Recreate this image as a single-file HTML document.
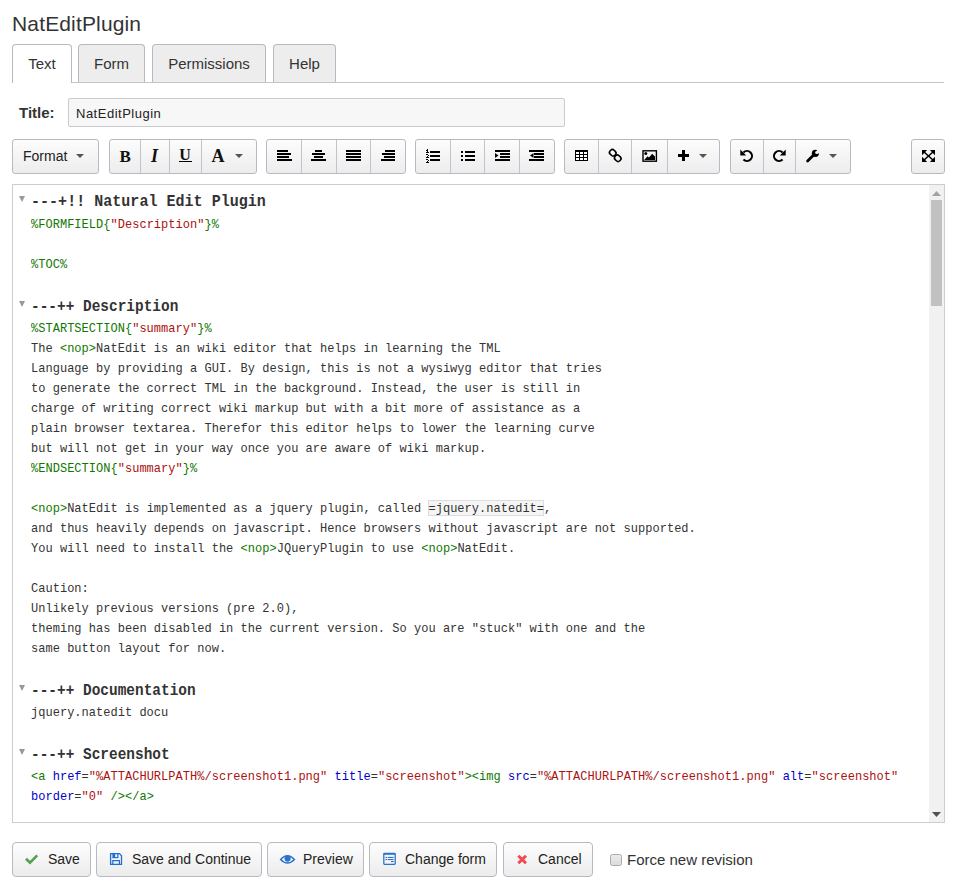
<!DOCTYPE html>
<html><head><meta charset="utf-8">
<style>
*{box-sizing:border-box}
html,body{margin:0;padding:0;background:#fff;width:960px;height:888px;overflow:hidden;font-family:"Liberation Sans",sans-serif;color:#333}
.abs{position:absolute}
#pt{left:12px;top:10px;letter-spacing:0.15px;font-size:21px;line-height:28px;color:#333}
.tabline{left:12px;top:82px;width:932px;height:1px;background:#c3c3cb;z-index:1}
.tab{position:absolute;top:44px;height:38px;border:1px solid #b9b9c3;border-bottom:none;border-radius:4px 4px 0 0;background:#ededed;font-size:15px;line-height:38px;text-align:center;color:#333}
.ts{display:inline-block}
.tab.act{background:#fff;height:39px;z-index:2}
#tl{left:19px;top:103px;font-size:15px;font-weight:bold;line-height:20px;color:#333}
#ti{left:68px;top:98px;width:497px;height:29px;border:1px solid #cbcbcb;border-radius:2px;background:#f7f7f7;font-size:13px;line-height:29px;padding-left:7px;letter-spacing:0.5px;color:#222}
.grp{position:absolute;top:139px;height:35px;border:1px solid #b9b9c3;border-radius:3px;background:linear-gradient(#fdfdfd,#ececec);display:flex}
.grp>div{height:33px;border-left:1px solid #c2c2ca;position:relative}
.grp>div:first-child{border-left:none}
.grp svg{position:absolute}
.caret{position:absolute;width:0;height:0;border-left:4px solid transparent;border-right:4px solid transparent;border-top:4px solid #555}
#ed{left:12px;top:184px;width:933px;height:639px;border:1px solid #cdcdcd;background:#fff;overflow:hidden}
#sb{position:absolute;right:0;top:0;width:15px;height:637px;background:#f1f1f1}
#thumb{position:absolute;left:2px;top:15px;width:11px;height:106px;background:#c1c1c1}
.ln{position:absolute;left:18px;margin-top:2px;transform:scaleY(1.08);transform-origin:0 15.2px;white-space:pre;font-family:"Liberation Mono",monospace;font-size:12px;color:#333}
.n{height:20px;line-height:20px;letter-spacing:0.025px}
.h1{transform:scaleY(1.12);font-size:15px;letter-spacing:0.03px;font-weight:bold;line-height:24px;color:#333;transform-origin:0 16px}
.h2{font-size:14.4px;letter-spacing:0.03px;font-weight:bold;line-height:24px;color:#333;transform-origin:0 15.8px;transform:scaleY(1.12)}
.fold{position:absolute;left:6px;width:0;height:0;border-left:3px solid transparent;border-right:3px solid transparent;border-top:6px solid #999}
.g{color:#170}
.r{color:#a11}
.b{color:#00c}
.code{background:#f5f5f5;box-shadow:inset 0 0 0 1px #dcdcdc;padding-top:1.5px}
.btn{position:absolute;top:842px;height:35px;border:1px solid #b9b9c3;border-radius:4px;background:linear-gradient(#fdfdfd,#ececec);font-size:14px;line-height:33px;color:#222}
.bt{position:absolute;top:842px;font-size:14px;line-height:35px;color:#222}
#cb{left:610px;top:854px;width:12px;height:12px;border:1px solid #aaa;border-radius:2.5px;background:linear-gradient(#ececec,#dcdcdc)}
#cbl{left:627px;top:850px;font-size:15px;line-height:20px;color:#333}
</style></head><body>
<div id="pt" class="abs">NatEditPlugin</div>

<div class="abs tabline"></div>
<div class="tab act" style="left:12px;width:60px"><span class="ts">Text</span></div>
<div class="tab" style="left:78px;width:67px"><span class="ts">Form</span></div>
<div class="tab" style="left:152px;width:114px"><span class="ts">Permissions</span></div>
<div class="tab" style="left:273px;width:63px"><span class="ts">Help</span></div>

<div id="tl" class="abs">Title:</div>
<div id="ti" class="abs">NatEditPlugin</div>

<!-- toolbar -->
<div class="grp" style="left:12px;width:87px"></div>
<span class="abs" style="left:23px;top:138px;font-size:14px;line-height:36px;color:#222">Format</span>
<div class="grp" style="left:109px;width:148px"></div>
<div class="grp" style="left:266px;width:140px"></div>
<div class="grp" style="left:415px;width:140px"></div>
<div class="grp" style="left:564px;width:156px"></div>
<div class="grp" style="left:730px;width:121px"></div>
<div class="grp" style="left:911px;width:34px"></div>
<svg class="abs" style="left:0;top:0" width="960" height="200">
<g fill="#c3c3cb" shape-rendering="crispEdges">
<rect x="140" y="140" width="1" height="33"/><rect x="169" y="140" width="1" height="33"/><rect x="201" y="140" width="1" height="33"/>
<rect x="301" y="140" width="1" height="33"/><rect x="336" y="140" width="1" height="33"/><rect x="370" y="140" width="1" height="33"/>
<rect x="450" y="140" width="1" height="33"/><rect x="484" y="140" width="1" height="33"/><rect x="519" y="140" width="1" height="33"/>
<rect x="598" y="140" width="1" height="33"/><rect x="631" y="140" width="1" height="33"/><rect x="667" y="140" width="1" height="33"/>
<rect x="763" y="140" width="1" height="33"/><rect x="795" y="140" width="1" height="33"/>
</g>
<g fill="#555">
<path d="M76 154 H84 L80 158Z"/><path d="M235 154 H243 L239 158Z"/><path d="M699 154 H707 L703 158Z"/><path d="M829 154 H837 L833 158Z"/>
</g>
<g font-family="Liberation Serif" font-weight="bold" fill="#111">
<text x="119.5" y="162" font-size="17">B</text>
<text x="151" y="162" font-size="18" font-style="italic">I</text>
<text x="179.3" y="160" font-size="16">U</text>
<text x="211.5" y="162" font-size="18">A</text>
</g>
<g fill="#000" shape-rendering="crispEdges">
<rect x="179" y="161" width="13" height="1"/>
<rect x="277" y="150" width="11" height="2"/><rect x="277" y="153" width="14" height="2"/><rect x="277" y="156" width="12" height="2"/><rect x="277" y="159" width="15" height="2"/>
<rect x="315" y="150" width="7" height="2"/><rect x="312" y="153" width="13" height="2"/><rect x="314" y="156" width="9" height="2"/><rect x="311" y="159" width="15" height="2"/>
<rect x="346" y="150" width="15" height="2"/><rect x="346" y="153" width="15" height="2"/><rect x="346" y="156" width="15" height="2"/><rect x="346" y="159" width="15" height="2"/>
<rect x="385" y="150" width="10" height="2"/><rect x="382" y="153" width="13" height="2"/><rect x="384" y="156" width="11" height="2"/><rect x="381" y="159" width="14" height="2"/>
<rect x="430" y="151" width="10" height="2"/><rect x="430" y="155" width="10" height="2"/><rect x="430" y="159" width="10" height="2"/>
<rect x="427" y="149" width="1" height="4"/><rect x="426" y="150" width="1" height="1"/><rect x="426" y="152" width="3" height="1"/>
<rect x="426" y="154" width="2" height="1"/><rect x="428" y="155" width="1" height="1"/><rect x="427" y="156" width="1" height="1"/><rect x="426" y="157" width="3" height="1"/>
<rect x="426" y="159" width="2" height="1"/><rect x="428" y="160" width="1" height="1"/><rect x="427" y="161" width="1" height="1"/><rect x="428" y="162" width="1" height="1"/><rect x="426" y="162" width="2" height="1"/>
<rect x="461" y="151" width="2" height="2"/><rect x="461" y="155" width="2" height="2"/><rect x="461" y="159" width="2" height="2"/>
<rect x="465" y="151" width="10" height="2"/><rect x="465" y="155" width="10" height="2"/><rect x="465" y="159" width="10" height="2"/>
<rect x="495" y="150" width="15" height="2"/><rect x="500" y="153" width="10" height="2"/><rect x="500" y="156" width="10" height="2"/><rect x="495" y="159" width="15" height="2"/>
<rect x="529" y="150" width="15" height="2"/><rect x="534" y="153" width="10" height="2"/><rect x="534" y="156" width="10" height="2"/><rect x="529" y="159" width="15" height="2"/>
<rect x="575" y="150" width="13" height="11"/>
<rect x="682" y="150" width="3" height="11"/><rect x="678" y="154" width="11" height="3"/>
</g>
<path d="M495 153 L498.5 155.5 L495 158Z" fill="#000"/>
<path d="M533.5 153 L530 155.5 L533.5 158Z" fill="#000"/>
<g fill="#fff" shape-rendering="crispEdges">
<rect x="576" y="152" width="3" height="2"/><rect x="580" y="152" width="3" height="2"/><rect x="584" y="152" width="3" height="2"/>
<rect x="576" y="155" width="3" height="2"/><rect x="580" y="155" width="3" height="2"/><rect x="584" y="155" width="3" height="2"/>
<rect x="576" y="158" width="3" height="2"/><rect x="580" y="158" width="3" height="2"/><rect x="584" y="158" width="3" height="2"/>
</g>
<g fill="none" stroke="#000" stroke-width="1.6">
<rect x="609.5" y="150" width="6.5" height="5.5" rx="2.4" transform="rotate(45 612.75 152.75)"/>
<rect x="614.5" y="155.5" width="6.5" height="5.5" rx="2.4" transform="rotate(45 617.75 158.25)"/>
</g>
<rect x="643" y="150.8" width="13.4" height="10.4" fill="none" stroke="#000" stroke-width="1.4"/>
<circle cx="645.8" cy="153.6" r="1.5" fill="#000"/>
<path d="M644.2 160 L647.5 156.2 L649 157.5 L652.2 153.8 L655 156.6 L655 160Z" fill="#000"/>
<path d="M743.46 152.46 A5 5 0 1 1 743.46 159.54" fill="none" stroke="#000" stroke-width="2.1"/>
<path d="M740.3 149.5 L740.3 155.4 L746.2 155.4Z" fill="#000"/>
<path d="M782.54 152.46 A5 5 0 1 0 782.54 159.54" fill="none" stroke="#000" stroke-width="2.1"/>
<path d="M785.7 149.5 L785.7 155.4 L779.8 155.4Z" fill="#000"/>
<path d="M807.6 161 L812.6 156" stroke="#000" stroke-width="2.8" stroke-linecap="round"/>
<circle cx="815.4" cy="153.3" r="3.6" fill="#000"/>
<circle cx="816.7" cy="152.4" r="1.5" fill="#f6f6f6"/>
<path d="M816.2 151.2 L818.2 149 L820.5 151.2 L820.3 153.6 L817.4 153.4Z" fill="#f6f6f6"/>
<g fill="#000"><path d="M922 150 H927.2 L922 155.2Z"/><path d="M935 150 H929.8 L935 155.2Z"/><path d="M922 162 H927.2 L922 156.8Z"/><path d="M935 162 H929.8 L935 156.8Z"/></g>
<g stroke="#000" stroke-width="1.5"><path d="M923.5 151.5 L933.5 160.5"/><path d="M933.5 151.5 L923.5 160.5"/></g>
</svg>

<!-- editor -->
<div id="ed" class="abs">
 <div id="sb"><svg class="abs" style="left:3px;top:6px" width="9" height="5"><path d="M0 5 L4.5 0 L9 5Z" fill="#a3a3a3"/></svg><div id="thumb"></div><svg class="abs" style="left:3px;top:627px" width="9" height="5"><path d="M0 0 L4.5 5 L9 0Z" fill="#505050"/></svg></div>
 <i class="fold" style="top:11px"></i>
 <div class="ln h1" style="top:4px">---+!! Natural Edit Plugin</div>
 <div class="ln n" style="top:28px"><span class="g">%FORMFIELD{</span><span class="r">"Description"</span><span class="g">}%</span></div>
 <div class="ln n g" style="top:68px">%TOC%</div>
 <i class="fold" style="top:116px"></i>
 <div class="ln h2" style="top:108px">---++ Description</div>
 <div class="ln n" style="top:132px"><span class="g">%STARTSECTION{</span><span class="r">"summary"</span><span class="g">}%</span></div>
 <div class="ln n" style="top:152px">The <span class="g">&lt;nop&gt;</span>NatEdit is an wiki editor that helps in learning the TML</div>
 <div class="ln n" style="top:172px">Language by providing a GUI. By design, this is not a wysiwyg editor that tries</div>
 <div class="ln n" style="top:192px">to generate the correct TML in the background. Instead, the user is still in</div>
 <div class="ln n" style="top:212px">charge of writing correct wiki markup but with a bit more of assistance as a</div>
 <div class="ln n" style="top:232px">plain browser textarea. Therefor this editor helps to lower the learning curve</div>
 <div class="ln n" style="top:252px">but will not get in your way once you are aware of wiki markup.</div>
 <div class="ln n" style="top:272px"><span class="g">%ENDSECTION{</span><span class="r">"summary"</span><span class="g">}%</span></div>
 <div class="ln n" style="top:312px"><span class="g">&lt;nop&gt;</span>NatEdit is implemented as a jquery plugin, called <span class="code">=jquery.natedit=</span>,</div>
 <div class="ln n" style="top:332px">and thus heavily depends on javascript. Hence browsers without javascript are not supported.</div>
 <div class="ln n" style="top:352px">You will need to install the <span class="g">&lt;nop&gt;</span>JQueryPlugin to use <span class="g">&lt;nop&gt;</span>NatEdit.</div>
 <div class="ln n" style="top:392px">Caution:</div>
 <div class="ln n" style="top:412px">Unlikely previous versions (pre 2.0),</div>
 <div class="ln n" style="top:432px">theming has been disabled in the current version. So you are "stuck" with one and the</div>
 <div class="ln n" style="top:452px">same button layout for now.</div>
 <i class="fold" style="top:500px"></i>
 <div class="ln h2" style="top:492px">---++ Documentation</div>
 <div class="ln n" style="top:516px">jquery.natedit docu</div>
 <i class="fold" style="top:564px"></i>
 <div class="ln h2" style="top:556px">---++ Screenshot</div>
 <div class="ln n" style="top:580px"><span class="g">&lt;a</span> <span class="b">href</span>=<span class="r">"%ATTACHURLPATH%/screenshot1.png"</span> <span class="b">title</span>=<span class="r">"screenshot"</span><span class="g">&gt;&lt;img</span> <span class="b">src</span>=<span class="r">"%ATTACHURLPATH%/screenshot1.png"</span> <span class="b">alt</span>=<span class="r">"screenshot"</span></div>
 <div class="ln n" style="top:600px"><span class="b">border</span>=<span class="r">"0"</span> <span class="g">/&gt;&lt;/a&gt;</span></div>
</div>

<!-- buttons -->
<div class="btn" style="left:12px;width:79px"></div>
<div class="btn" style="left:96px;width:166px"></div>
<div class="btn" style="left:267px;width:97px"></div>
<div class="btn" style="left:369px;width:128px"></div>
<div class="btn" style="left:503px;width:90px"></div>
<span class="bt" style="left:48px">Save</span>
<span class="bt" style="left:132px">Save and Continue</span>
<span class="bt" style="left:303px">Preview</span>
<span class="bt" style="left:405px">Change form</span>
<span class="bt" style="left:538px">Cancel</span>
<svg class="abs" style="left:0;top:840px" width="960" height="48">
<g transform="translate(0,-840)">
<path d="M26 858.8 L30 862.6 L37.2 855.4" fill="none" stroke="#50a050" stroke-width="2.6"/>
<path d="M110.6 853.6 H119.4 L121.5 855.7 V864.4 H110.6Z" fill="none" stroke="#1f6fd2" stroke-width="1.3"/>
<rect x="112.4" y="853.4" width="2.8" height="4.3" fill="#1f6fd2"/>
<rect x="112.4" y="857" width="5.8" height="1.2" fill="#1f6fd2"/>
<rect x="117.2" y="853.4" width="1.2" height="4.5" fill="#1f6fd2"/>
<path d="M112.8 864.4 V860.6 H119.4 V864.4" fill="none" stroke="#1f6fd2" stroke-width="1.2"/>
<path d="M280.6 859.4 Q287.5 852.2 294.4 859.4 Q287.5 866.6 280.6 859.4Z" fill="none" stroke="#2a72cc" stroke-width="1.4"/>
<circle cx="287.6" cy="858.6" r="3.1" fill="#2a72cc"/>
<rect x="383.8" y="853.4" width="11.4" height="11" rx="0.8" fill="none" stroke="#2a72cc" stroke-width="1.3"/>
<rect x="383.8" y="853" width="11.4" height="1.8" fill="#2a72cc"/>
<g fill="#2a72cc"><rect x="385.5" y="856.9" width="1.8" height="1.1"/><rect x="388" y="856.9" width="5.5" height="1.1"/><rect x="385.5" y="859" width="1.8" height="1.1"/><rect x="388" y="859" width="5.5" height="1.1"/><rect x="391" y="861" width="2.6" height="1.1"/></g>
<path d="M518.3 855.7 L526 863.3 M526 855.7 L518.3 863.3" stroke="#f04a52" stroke-width="3"/>
</g>
</svg>
<div id="cb" class="abs"></div>
<div id="cbl" class="abs">Force new revision</div>
</body></html>
